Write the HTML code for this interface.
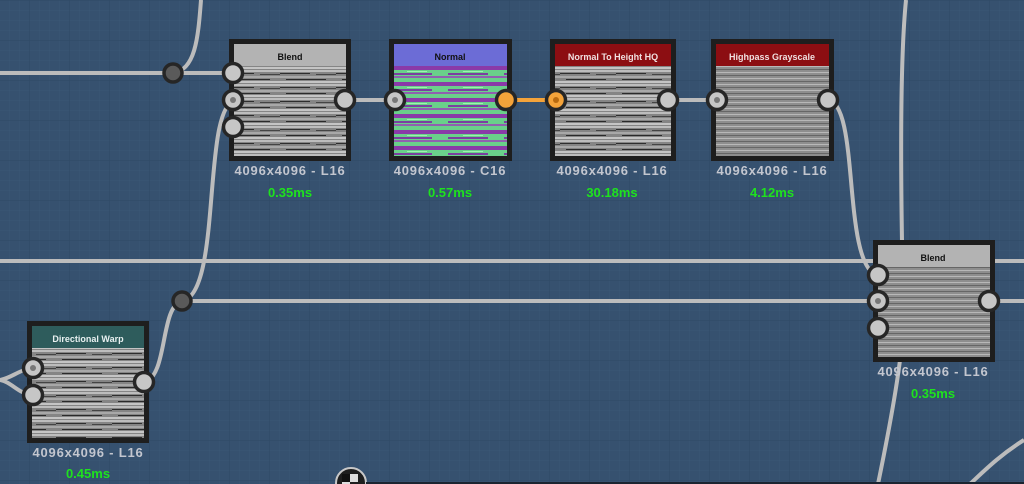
<!DOCTYPE html>
<html><head><meta charset="utf-8"><style>
html,body{margin:0;padding:0;width:1024px;height:484px;overflow:hidden;background:#36516f}
svg{display:block}
text{font-family:"Liberation Sans",sans-serif;font-weight:bold}
</style></head><body>
<svg width="1024" height="484" viewBox="0 0 1024 484" xmlns="http://www.w3.org/2000/svg">
<defs>
<pattern id="minor" x="9" y="0" width="10" height="10" patternUnits="userSpaceOnUse">
<path d="M0 0V10M0 0H10" stroke="#3b5775" stroke-width="1" fill="none"/>
</pattern>
<pattern id="major" x="29" y="0" width="40" height="40" patternUnits="userSpaceOnUse">
<path d="M0 0V40M0 0H40" stroke="#304a66" stroke-width="1.2" fill="none"/>
</pattern>
<pattern id="gtex" width="56" height="14" patternUnits="userSpaceOnUse">
<rect width="56" height="14" fill="#858585"/>
<rect y="0" width="56" height="2" fill="#bdbdbd"/>
<rect y="3" width="30" height="1" fill="#2e2e2e"/><rect x="36" y="4" width="20" height="1" fill="#444"/>
<rect y="6" width="56" height="2" fill="#a8a8a8"/>
<rect x="6" y="9" width="40" height="1" fill="#2a2a2a"/>
<rect y="11" width="56" height="2" fill="#c4c4c4"/>
</pattern>
<pattern id="gtex2" width="56" height="6" patternUnits="userSpaceOnUse">
<rect width="56" height="6" fill="#8e8e8e"/>
<rect y="0" width="56" height="1" fill="#b8b8b8"/>
<rect y="3" width="56" height="1" fill="#666"/>
</pattern>
<pattern id="ntex" width="56" height="16" patternUnits="userSpaceOnUse">
<rect width="56" height="16" fill="#6ad08a"/>
<rect y="2" width="56" height="4" fill="#8a3aa8"/>
<rect y="9" width="40" height="2" fill="#7a40a0"/>
<rect y="12" width="56" height="2" fill="#9060b0"/>
<rect x="15" y="7" width="20" height="1" fill="#a0f0b0"/>
</pattern>
</defs>
<rect width="1024" height="484" fill="#36516f"/>
<rect width="1024" height="484" fill="url(#minor)"/>
<rect width="1024" height="484" fill="url(#major)"/>

<g stroke="#bcbcbc" stroke-width="4" fill="none">
<path d="M0 73H233"/>
<path d="M173 73C195 70 198 40 201 0"/>
<path d="M346 100H393"/>
<path d="M667 100H716"/>
<path d="M828 100C860 104 842 260 876 275"/>
<path d="M0 261H1024"/>
<path d="M182 301H877"/>
<path d="M990 301H1024"/>
<path d="M182 301C222 295 202 110 234 101"/>
<path d="M182 301C160 306 168 375 145 382"/>
<path d="M0 380C12 378 18 370 33 368"/>
<path d="M0 380C12 382 18 394 33 395"/>
<path d="M906 0C900 60 901 180 902 241"/>
<path d="M900 360C895 400 885 450 878 484"/>
<path d="M1024 440C1000 455 985 470 970 484"/>
</g>
<path d="M506 100H555" stroke="#f4a33a" stroke-width="4"/>

<circle cx="173" cy="73" r="9" fill="#5a5a5a" stroke="#262626" stroke-width="3.5"/>
<circle cx="182" cy="301" r="9" fill="#5a5a5a" stroke="#262626" stroke-width="3.5"/>

<rect x="229" y="39" width="122" height="122" fill="#1e1e1e"/>
<rect x="234" y="44" width="112" height="112" fill="url(#gtex)"/>
<rect x="234" y="44" width="112" height="22" fill="#b3b3b3"/>
<text x="290" y="60" font-size="9" fill="#111" text-anchor="middle">Blend</text>

<rect x="389" y="39" width="123" height="122" fill="#1e1e1e"/>
<rect x="394" y="44" width="113" height="112" fill="url(#ntex)"/>
<rect x="394" y="44" width="113" height="22" fill="#6c6cd6"/>
<text x="450" y="60" font-size="9" fill="#111" text-anchor="middle">Normal</text>

<rect x="550" y="39" width="126" height="122" fill="#1e1e1e"/>
<rect x="555" y="44" width="116" height="112" fill="url(#gtex)"/>
<rect x="555" y="44" width="116" height="22" fill="#8c0e12"/>
<text x="613" y="60" font-size="9" fill="#f0e0e0" text-anchor="middle">Normal To Height HQ</text>

<rect x="711" y="39" width="123" height="122" fill="#1e1e1e"/>
<rect x="716" y="44" width="113" height="112" fill="url(#gtex2)"/>
<rect x="716" y="44" width="113" height="22" fill="#8c0e12"/>
<text x="772" y="60" font-size="9" fill="#f0e0e0" text-anchor="middle">Highpass Grayscale</text>

<rect x="873" y="240" width="122" height="122" fill="#1e1e1e"/>
<rect x="878" y="245" width="112" height="112" fill="url(#gtex2)"/>
<rect x="878" y="245" width="112" height="22" fill="#b3b3b3"/>
<text x="933" y="261" font-size="9" fill="#111" text-anchor="middle">Blend</text>

<rect x="27" y="321" width="122" height="122" fill="#1e1e1e"/>
<rect x="32" y="326" width="112" height="112" fill="url(#gtex)"/>
<rect x="32" y="326" width="112" height="22" fill="#2e5c5c"/>
<text x="88" y="342" font-size="9" fill="#e8f0f0" text-anchor="middle">Directional Warp</text>

<g stroke="#262626" stroke-width="3.5" fill="#c6c6c6">
<circle cx="233" cy="73" r="9.5"/><circle cx="233" cy="100" r="9.5"/><circle cx="233" cy="127" r="9.5"/>
<circle cx="345" cy="100" r="9.5"/>
<circle cx="395" cy="100" r="9.5"/>
<circle cx="506" cy="100" r="9.5" fill="#f4a33a"/>
<circle cx="556" cy="100" r="9.5" fill="#f4a33a"/>
<circle cx="668" cy="100" r="9.5"/>
<circle cx="717" cy="100" r="9.5"/>
<circle cx="828" cy="100" r="9.5"/>
<circle cx="878" cy="275" r="9.5"/><circle cx="878" cy="301" r="9.5"/><circle cx="878" cy="328" r="9.5"/>
<circle cx="989" cy="301" r="9.5"/>
<circle cx="33" cy="368" r="9.5"/><circle cx="33" cy="395" r="9.5"/>
<circle cx="144" cy="382" r="9.5"/>
</g>
<g fill="#777">
<circle cx="233" cy="100" r="3"/><circle cx="395" cy="100" r="3"/><circle cx="556" cy="100" r="3" fill="#b86a10"/>
<circle cx="717" cy="100" r="3"/><circle cx="878" cy="301" r="3"/><circle cx="33" cy="368" r="3"/>
</g>

<g font-size="13" fill="#c3c6cf" text-anchor="middle" letter-spacing="0.8">
<text x="290" y="175">4096x4096 - L16</text>
<text x="450" y="175">4096x4096 - C16</text>
<text x="612" y="175">4096x4096 - L16</text>
<text x="772" y="175">4096x4096 - L16</text>
<text x="933" y="376">4096x4096 - L16</text>
<text x="88" y="457">4096x4096 - L16</text>
</g>
<g font-size="13" fill="#1ee21e" text-anchor="middle">
<text x="290" y="197">0.35ms</text>
<text x="450" y="197">0.57ms</text>
<text x="612" y="197">30.18ms</text>
<text x="772" y="197">4.12ms</text>
<text x="933" y="398">0.35ms</text>
<text x="88" y="478">0.45ms</text>
</g>

<circle cx="351" cy="483" r="15" fill="#1e1e1e" stroke="#c8c8c8" stroke-width="2"/>
<rect x="342" y="474" width="8" height="8" fill="#111"/>
<rect x="350" y="474" width="8" height="8" fill="#ddd"/>
<rect x="342" y="482" width="8" height="4" fill="#ddd"/>
<rect x="366" y="482" width="658" height="2" fill="#1a2430"/>
</svg>
</body></html>
